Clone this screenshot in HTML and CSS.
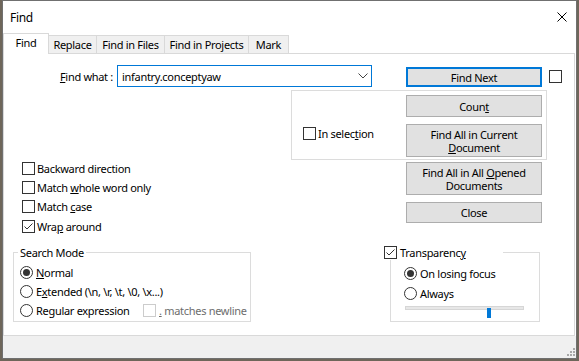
FILE: index.html
```html
<!DOCTYPE html>
<html lang="en">
<head>
    <meta charset="UTF-8">
    <title>Find</title>
    <link rel="stylesheet" href="styles.css">
</head>
<body>
<div class="window">
    <div class="titlebar">
        <span class="title">Find</span>
        <svg class="close" width="10" height="10" viewBox="0 0 10 10">
            <path d="M0.5 0.5 L9.5 9.5 M9.5 0.5 L0.5 9.5" stroke="#000" stroke-width="1" fill="none"/>
        </svg>
    </div>

    <div class="tabs">
        <div class="tab active tab-find">Find</div>
        <div class="tab tab-replace">Replace</div>
        <div class="tab tab-files">Find in Files</div>
        <div class="tab tab-projects">Find in Projects</div>
        <div class="tab tab-mark">Mark</div>
    </div>

    <div class="pane">
        <div class="find-row">
            <label class="what-label"><u>F</u>ind what :</label>
            <div class="combo">
                <span>infantry.conceptyaw</span>
                <svg width="10" height="6" viewBox="0 0 10 6">
                    <polyline points="0.5,0.5 5,5 9.5,0.5" stroke="#444" stroke-width="1" fill="none"/>
                </svg>
            </div>
            <button class="btn btn-default">Find Next</button>
            <span class="check"></span>
        </div>

        <div class="selection-box">
            <label class="opt opt-sel"><span class="check"></span><span>In selec<u>t</u>ion</span></label>
            <div class="btn-col">
                <button class="btn">Coun<u>t</u></button>
                <button class="btn btn-tall">Find All in Current<br><u>D</u>ocument</button>
            </div>
        </div>

        <div class="options-row">
            <div class="options">
                <label class="opt"><span class="check"></span><span>Backward direction</span></label>
                <label class="opt"><span class="check"></span><span>Match <u>w</u>hole word only</span></label>
                <label class="opt"><span class="check"></span><span>Match <u>c</u>ase</span></label>
                <label class="opt"><span class="check">
                    <svg width="11" height="11" viewBox="0 0 11 11"><polyline points="1.5,5.5 4,8 9.5,2.5" stroke="#333" stroke-width="1" fill="none"/></svg>
                </span><span>Wra<u>p</u> around</span></label>
            </div>
            <div class="btn-col btn-col-low">
                <button class="btn btn-tall">Find All in All <u>O</u>pened<br>Documents</button>
                <button class="btn btn-close">Close</button>
            </div>
        </div>

        <div class="groups-row">
            <div class="group search-mode">
                <span class="caption">Search Mode</span>
                <label class="opt"><span class="radio on"></span><span><u>N</u>ormal</span></label>
                <label class="opt"><span class="radio"></span><span>E<u>x</u>tended (\n, \r, \t, \0, \x...)</span></label>
                <label class="opt">
                    <span class="radio"></span><span class="regex-text">Re<u>g</u>ular expression</span>
                    <span class="check disabled"></span><span class="muted"><u>.</u> matches newline</span>
                </label>
            </div>
            <div class="group transp">
                <label class="caption caption-check"><span class="check">
                    <svg width="11" height="11" viewBox="0 0 11 11"><polyline points="1.5,5.5 4,8 9.5,2.5" stroke="#333" stroke-width="1" fill="none"/></svg>
                </span><span>Transparenc<u>y</u></span></label>
                <label class="opt"><span class="radio on"></span><span>On losing focus</span></label>
                <label class="opt"><span class="radio"></span><span>Always</span></label>
                <div class="slider">
                    <div class="track"></div>
                    <div class="thumb"></div>
                </div>
            </div>
        </div>
    </div>

    <div class="status">
        <svg width="8" height="8" viewBox="0 0 8 8">
            <rect x="6" y="0" width="2" height="2" fill="#a8a8a8"/>
            <rect x="3" y="3" width="2" height="2" fill="#a8a8a8"/>
            <rect x="6" y="3" width="2" height="2" fill="#a8a8a8"/>
            <rect x="0" y="6" width="2" height="2" fill="#a8a8a8"/>
            <rect x="3" y="6" width="2" height="2" fill="#a8a8a8"/>
            <rect x="6" y="6" width="2" height="2" fill="#a8a8a8"/>
        </svg>
    </div>
</div>
</body>
</html>
```

FILE: styles.css
```css
* {
    box-sizing: border-box;
}

body {
    margin: 0;
    background-color: #6e665a;
    font-family: "Noto Sans", "Open Sans", sans-serif;
    font-size: 11px;
    letter-spacing: -0.3px;
    color: #000;
}

u {
    text-decoration: underline;
    text-underline-offset: 1px;
}

.window {
    margin-left: 2px;
    width: 575px;
    height: 359px;
    border: 1px solid #707070;
    background-color: #fff;
    display: flex;
    flex-direction: column;
}

.titlebar {
    flex: none;
    height: 31px;
    display: flex;
    align-items: center;
    justify-content: space-between;
    padding: 1px 9px 0 7px;
    font-size: 12px;
}

/* tabs */
.tabs {
    flex: none;
    height: 21px;
    display: flex;
    align-items: flex-end;
    position: relative;
    z-index: 1;
}

.tab {
    height: 18px;
    border: 1px solid #d9d9d9;
    border-left: none;
    border-bottom: none;
    background-color: #f0f0f0;
    text-align: center;
    line-height: 17px;
}

.tab.active {
    height: 21px;
    margin-bottom: -1px;
    border-left: 1px solid #d9d9d9;
    background-color: #fff;
    line-height: 18px;
}

.tab-find { width: 46px; }
.tab-replace { width: 48px; }
.tab-files { width: 68px; }
.tab-projects { width: 84px; }
.tab-mark { width: 40px; }

.pane {
    flex: none;
    height: 283px;
    margin-right: 1px;
    border: 1px solid #d9d9d9;
    background-color: #fff;
}

.status {
    flex: none;
    height: 22px;
    background-color: #f0f0f0;
    display: flex;
    justify-content: flex-end;
    align-items: flex-end;
    padding: 0 1px 2px 0;
}

/* controls */
.check {
    flex: none;
    width: 13px;
    height: 13px;
    border: 1px solid #333;
    background-color: #fff;
    margin-right: 2px;
    display: flex;
    align-items: center;
    justify-content: center;
}

.check.disabled {
    border-color: #cccccc;
}

.radio {
    flex: none;
    width: 13px;
    height: 13px;
    border: 1px solid #333;
    border-radius: 50%;
    margin-right: 3px;
    display: flex;
    align-items: center;
    justify-content: center;
}

.radio.on::after {
    content: "";
    width: 7px;
    height: 7px;
    border-radius: 50%;
    background-color: #333;
}

.opt {
    display: flex;
    align-items: center;
    height: 19px;
    white-space: nowrap;
}

.btn {
    font-family: inherit;
    font-size: 11px;
    letter-spacing: -0.3px;
    color: #000;
    background-color: #e1e1e1;
    border: 1px solid #adadad;
    padding: 0;
    width: 136px;
    height: 22px;
    line-height: 13px;
    text-align: center;
}

.btn-tall {
    height: 33px;
}

.btn-close {
    height: 21px;
}

.btn-default {
    height: 20px;
    border: 2px solid #0078d7;
    margin-left: 34px;
}

/* find row */
.find-row {
    display: flex;
    align-items: flex-end;
    height: 22px;
    margin-top: 11px;
}

.what-label {
    width: 109px;
    margin-right: 4px;
    text-align: right;
    align-self: center;
}

.combo {
    width: 255px;
    height: 22px;
    border: 1px solid #0078d7;
    display: flex;
    align-items: center;
    justify-content: space-between;
    padding: 0 3px 0 4px;
}

.find-row .check {
    margin-left: 7px;
    align-self: center;
}

/* in selection */
.selection-box {
    display: flex;
    margin: 3px 0 0 287px;
    width: 256px;
    height: 70px;
    border: 1px solid #dcdcdc;
    padding: 4px 0 0 11px;
}

.opt-sel {
    width: 103px;
    height: 15px;
    margin-top: 31px;
}

.btn-col {
    display: flex;
    flex-direction: column;
    gap: 7px;
}

/* options */
.options-row {
    display: flex;
}

.options {
    width: 402px;
    padding-left: 18px;
    margin-top: -1px;
}

.options .opt:last-child {
    height: 20px;
    padding-top: 1px;
}

.btn-col-low {
    margin-top: 2px;
}

/* groups */
.groups-row {
    display: flex;
    margin-top: 16px;
}

.group {
    position: relative;
    height: 70px;
    border: 1px solid #dcdcdc;
    padding-top: 10px;
}

.caption {
    position: absolute;
    top: -8px;
    left: 4px;
    padding: 0 2px;
    line-height: 15px;
    background-color: #fff;
}

.search-mode {
    margin-left: 9px;
    width: 238px;
    padding-left: 6px;
}

.regex-text {
    width: 107px;
}

.muted {
    color: #6d6d6d;
    margin-left: 1px;
}

.transp {
    margin-left: 139px;
    width: 150px;
    padding-left: 13px;
}

.transp .opt {
    height: 20px;
}

.caption-check {
    left: -7px;
    width: 119px;
    padding: 0;
    display: flex;
    align-items: center;
}

.caption-check .check {
    margin-right: 3px;
}

.slider {
    position: relative;
    width: 119px;
    height: 12px;
    margin-left: 1px;
    margin-top: -3px;
}

.track {
    margin-top: 6px;
    height: 4px;
    background-color: #e7e7e7;
    border: 1px solid #d6d6d6;
}

.thumb {
    position: absolute;
    left: 82px;
    top: 2px;
    width: 4px;
    height: 10px;
    background-color: #0078d7;
}
```
